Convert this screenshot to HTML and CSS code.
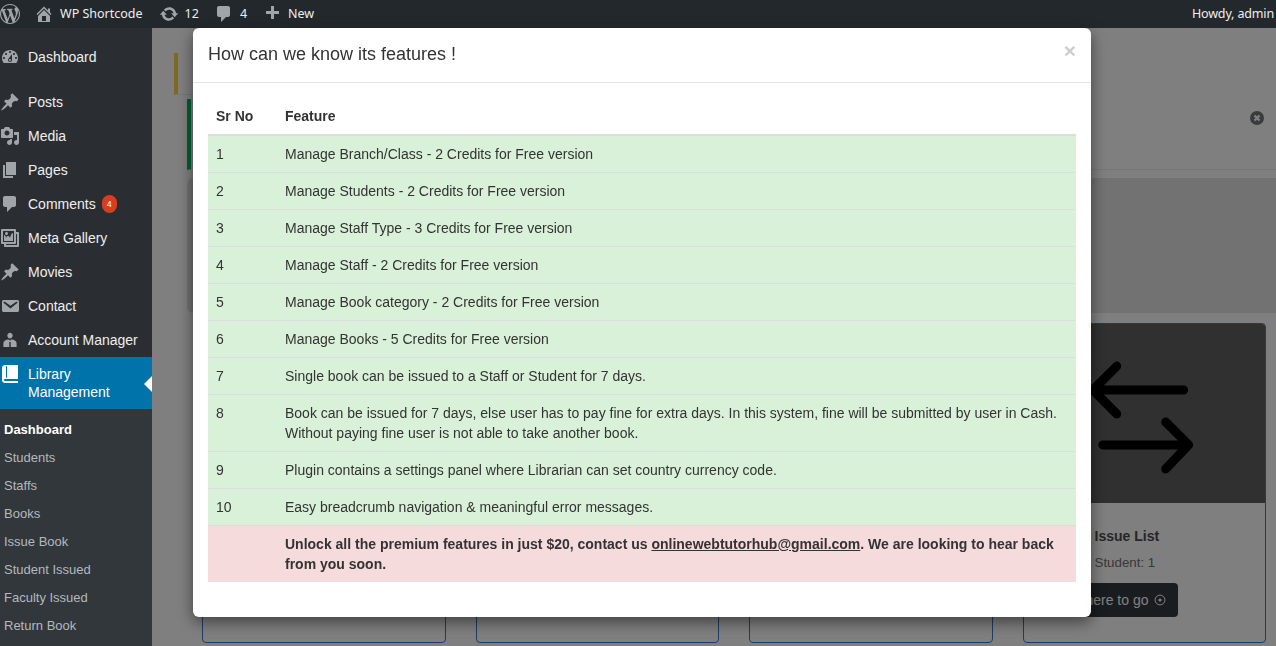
FILE: index.html
```html
<!DOCTYPE html>
<html lang="en">
<head>
<meta charset="utf-8">
<title>Library Management</title>
<link rel="stylesheet" href="styles.css">
</head>
<body>
<header class="adminbar">
  <svg class="bar-logo" viewBox="0 0 20 20"><path d="M20 10c0-5.51-4.49-10-10-10C4.48 0 0 4.49 0 10c0 5.52 4.48 10 10 10 5.51 0 10-4.48 10-10zM7.78 15.37L4.37 6.22c.55-.02 1.17-.08 1.17-.08.5-.06.44-1.13-.06-1.11 0 0-1.45.11-2.37.11-.18 0-.37 0-.58-.01C4.12 2.69 6.87 1.11 10 1.11c2.33 0 4.45.87 6.05 2.34-.68-.11-1.65.39-1.65 1.58 0 .74.45 1.36.9 2.1.35.61.55 1.36.55 2.46 0 1.49-1.4 5-1.4 5l-3.03-8.37c.54-.02.82-.17.82-.17.5-.05.44-1.25-.06-1.22 0 0-1.44.12-2.38.12-.87 0-2.33-.12-2.33-.12-.5-.03-.56 1.2-.06 1.22l.92.08 1.26 3.41zM17.41 10c.24-.64.74-1.87.43-4.25.7 1.29 1.05 2.71 1.05 4.25 0 3.29-1.73 6.24-4.4 7.78.97-2.59 1.94-5.2 2.92-7.78zM6.1 18.09C3.12 16.65 1.11 13.53 1.11 10c0-1.3.23-2.48.72-3.59C3.25 10.3 4.67 14.2 6.1 18.09zm4.03-6.63l2.58 6.98c-.86.29-1.76.45-2.71.45-.79 0-1.57-.11-2.29-.33.81-2.38 1.62-4.74 2.42-7.1z"/></svg>
  <div class="bar-item bar-site">
    <svg class="bar-icon" viewBox="0 0 20 20"><path d="M16 8.5l1.53 1.53-1.06 1.06L10 4.62l-6.47 6.47-1.06-1.06L10 2.5l4 4v-2h2v4zm-6-2.46l6 5.99V18H4v-5.97zM12 17v-5H8v5h4z"/></svg>
    <span>WP Shortcode</span>
  </div>
  <div class="bar-item bar-updates">
    <svg class="bar-icon" viewBox="0 0 20 20"><path d="M10.2 3.28c3.53 0 6.43 2.61 6.92 6h2.08l-3.5 4-3.5-4h2.32c-.45-1.97-2.21-3.45-4.32-3.45-1.45 0-2.73.71-3.54 1.78L4.95 5.66C6.23 4.2 8.11 3.28 10.2 3.28zm-.4 13.44c-3.52 0-6.43-2.61-6.92-6H.8l3.5-4c1.17 1.33 2.33 2.67 3.5 4H5.48c.45 1.97 2.21 3.45 4.32 3.45 1.45 0 2.73-.71 3.54-1.78l1.71 1.95c-1.28 1.46-3.15 2.38-5.25 2.38z"/></svg>
    <span>12</span>
  </div>
  <div class="bar-item bar-comments">
    <svg class="bar-icon" viewBox="0 0 20 20"><path d="M5 2h9c1.1 0 2 .9 2 2v7c0 1.1-.9 2-2 2h-2l-5 5v-5H5c-1.1 0-2-.9-2-2V4c0-1.1.9-2 2-2z"/></svg>
    <span>4</span>
  </div>
  <div class="bar-item bar-new">
    <svg class="bar-icon" viewBox="0 0 20 20"><path d="M17 7v3h-5v5H9v-5H4V7h5V2h3v5h5z"/></svg>
    <span>New</span>
  </div>
  <div class="bar-howdy">Howdy, admin</div>
</header>

<div class="layout">
  <nav class="sidebar">
    <a class="menu-item menu-first">
      <svg class="menu-icon" viewBox="0 0 20 20"><path d="M3.76 16h12.48c1.1-1.37 1.76-3.11 1.76-5 0-4.42-3.58-8-8-8s-8 3.58-8 8c0 1.89.66 3.63 1.76 5zM10 4c.55 0 1 .45 1 1s-.45 1-1 1-1-.45-1-1 .45-1 1-1zM6 6c.55 0 1 .45 1 1s-.45 1-1 1-1-.45-1-1 .45-1 1-1zm8 0c.55 0 1 .45 1 1s-.45 1-1 1-1-.45-1-1 .45-1 1-1zm-5.37 5.55L12 7v6c0 1.1-.9 2-2 2s-2-.9-2-2c0-.57.24-1.08.63-1.45zM4 10c.55 0 1 .45 1 1s-.45 1-1 1-1-.45-1-1 .45-1 1-1zm12 0c.55 0 1 .45 1 1s-.45 1-1 1-1-.45-1-1 .45-1 1-1zm-5 3c0-.55-.45-1-1-1s-1 .45-1 1 .45 1 1 1 1-.45 1-1z"/></svg>
      <span>Dashboard</span>
    </a>
    <a class="menu-item menu-sep">
      <svg class="menu-icon" viewBox="0 0 20 20"><path d="M10.44 3.02l1.82-1.82 6.36 6.35-1.83 1.82c-1.05-.68-2.48-.57-3.41.36l-.75.75c-.92.93-1.04 2.35-.35 3.41l-1.83 1.82-2.41-2.41-2.8 2.79c-.42.42-3.38 2.71-3.8 2.29s1.86-3.39 2.28-3.81l2.79-2.79L4.1 9.36l1.83-1.82c1.05.69 2.48.57 3.41-.36l.75-.75c.93-.92 1.05-2.35.35-3.41z"/></svg>
      <span>Posts</span>
    </a>
    <a class="menu-item">
      <svg class="menu-icon" viewBox="0 0 20 20"><path d="M13 11V4c0-.55-.45-1-1-1h-1.67L9 1H5L3.67 3H2c-.55 0-1 .45-1 1v7c0 .55.45 1 1 1h10c.55 0 1-.45 1-1zM7 4.5c1.38 0 2.5 1.12 2.5 2.5S8.38 9.5 7 9.5 4.5 8.38 4.5 7 5.62 4.5 7 4.5zM14 6h5v10.5c0 1.38-1.12 2.5-2.5 2.5S14 17.88 14 16.5s1.12-2.5 2.5-2.5c.17 0 .34.02.5.05V9h-3V6zm-4 8.05V13h2v3.5c0 1.38-1.12 2.5-2.5 2.5S7 17.88 7 16.5 8.12 14 9.5 14c.17 0 .34.02.5.05z"/></svg>
      <span>Media</span>
    </a>
    <a class="menu-item">
      <svg class="menu-icon" viewBox="0 0 20 20"><path d="M6 15V2h10v13H6zm-1 1h8v2H3V5h2v11z"/></svg>
      <span>Pages</span>
    </a>
    <a class="menu-item">
      <svg class="menu-icon" viewBox="0 0 20 20"><path d="M5 2h9c1.1 0 2 .9 2 2v7c0 1.1-.9 2-2 2h-2l-5 5v-5H5c-1.1 0-2-.9-2-2V4c0-1.1.9-2 2-2z"/></svg>
      <span>Comments</span><b class="badge">4</b>
    </a>
    <a class="menu-item">
      <svg class="menu-icon" viewBox="0 0 20 20"><path d="M16 4h1.96c.57 0 1.04.47 1.04 1.04v12.92c0 .57-.47 1.04-1.04 1.04H5.04C4.47 19 4 18.53 4 17.96V16H2.04C1.47 16 1 15.53 1 14.96V2.04C1 1.47 1.47 1 2.04 1h12.92c.57 0 1.04.47 1.04 1.04V4zM3 14h11V3H3v11zm5-8.5C8 4.67 7.33 4 6.5 4S5 4.67 5 5.5 5.67 7 6.5 7 8 6.33 8 5.5zm2 4.5s1-5 3-5v8H4V7c2 0 2 3 2 3s.33-2 2-2 2 2 2 2zm7 7V6h-1v8.96c0 .57-.47 1.04-1.04 1.04H6v1h11z"/></svg>
      <span>Meta Gallery</span>
    </a>
    <a class="menu-item">
      <svg class="menu-icon" viewBox="0 0 20 20"><path d="M10.44 3.02l1.82-1.82 6.36 6.35-1.83 1.82c-1.05-.68-2.48-.57-3.41.36l-.75.75c-.92.93-1.04 2.35-.35 3.41l-1.83 1.82-2.41-2.41-2.8 2.79c-.42.42-3.38 2.71-3.8 2.29s1.86-3.39 2.28-3.81l2.79-2.79L4.1 9.36l1.83-1.82c1.05.69 2.48.57 3.41-.36l.75-.75c.93-.92 1.05-2.35.35-3.41z"/></svg>
      <span>Movies</span>
    </a>
    <a class="menu-item">
      <svg class="menu-icon" viewBox="0 0 20 20"><path d="M3.87 4h13.25C18.37 4 19 4.59 19 5.79v8.42c0 1.19-.63 1.79-1.88 1.79H3.87c-1.25 0-1.88-.6-1.88-1.79V5.79c0-1.2.63-1.79 1.88-1.79zm6.62 8.6l6.74-5.53c.24-.2.43-.66.13-1.07-.29-.41-.82-.42-1.17-.17l-5.7 3.86L4.8 5.83c-.35-.25-.88-.24-1.17.17-.3.41-.11.87.13 1.07z"/></svg>
      <span>Contact</span>
    </a>
    <a class="menu-item">
      <svg class="menu-icon" viewBox="0 0 20 20"><path fill-rule="evenodd" d="M7.3 5.6c0-1.5 1.2-2.9 2.7-2.9s2.7 1.4 2.7 2.9S11.5 8.6 10 8.6 7.3 7.1 7.3 5.6zM3.4 17v-3.6c0-2.3 1.9-3.7 5.4-3.9l1.2 1.3 1.2-1.3c3.5.2 5.4 1.6 5.4 3.9V17zM9.3 12v5h1.4v-5z"/></svg>
      <span>Account Manager</span>
    </a>
    <a class="menu-item menu-current">
      <svg class="menu-icon" viewBox="0 0 20 20"><path fill-rule="evenodd" d="M5 17h13v2H5c-1.66 0-3-1.34-3-3V4c0-1.66 1.34-3 3-3h13v14H5c-.55 0-1 .45-1 1s.45 1 1 1zm2-3.5v-11c0-.28-.22-.5-.5-.5s-.5.22-.5.5v11c0 .28.22.5.5.5s.5-.22.5-.5z"/></svg>
      <span>Library Management</span>
    </a>
    <ul class="submenu">
      <li class="sub-current">Dashboard</li>
      <li>Students</li>
      <li>Staffs</li>
      <li>Books</li>
      <li>Issue Book</li>
      <li>Student Issued</li>
      <li>Faculty Issued</li>
      <li>Return Book</li>
    </ul>
  </nav>

  <main class="content">
    <div class="notice notice-warning"></div>
    <div class="notice notice-success">
      <svg class="dismiss" viewBox="0 0 14 14"><circle cx="7" cy="7" r="7"/><path d="M4.5 4.5l5 5M9.5 4.5l-5 5"/></svg>
    </div>
    <div class="panel"></div>
    <div class="cards">
      <div class="card"></div>
      <div class="card"></div>
      <div class="card"></div>
      <div class="card">
        <div class="card-image">
          <svg class="arrows" viewBox="0 0 242 179"><path d="M160 66H69M93 42L69 66l24 24M79 121h86M142 98l23 23-23 24"/></svg>
        </div>
        <div class="card-body">
          <h4 class="card-title">Issue List</h4>
          <p class="card-text">Student: 1</p>
          <div class="card-btn">here to go
            <svg class="btn-icon" viewBox="0 0 12 12"><circle cx="6" cy="6" r="4.9"/><circle class="btn-dot" cx="6" cy="6" r="1.6"/></svg>
          </div>
        </div>
      </div>
    </div>
  </main>
</div>

<div class="backdrop"></div>

<section class="modal">
  <div class="modal-header">
    <h4 class="modal-title">How can we know its features !</h4>
    <span class="close">×</span>
  </div>
  <div class="modal-body">
    <table class="features">
      <thead>
        <tr><th class="col-no">Sr No</th><th>Feature</th></tr>
      </thead>
      <tbody>
        <tr><td>1</td><td>Manage Branch/Class - 2 Credits for Free version</td></tr>
        <tr><td>2</td><td>Manage Students - 2 Credits for Free version</td></tr>
        <tr><td>3</td><td>Manage Staff Type - 3 Credits for Free version</td></tr>
        <tr><td>4</td><td>Manage Staff - 2 Credits for Free version</td></tr>
        <tr><td>5</td><td>Manage Book category - 2 Credits for Free version</td></tr>
        <tr><td>6</td><td>Manage Books - 5 Credits for Free version</td></tr>
        <tr><td>7</td><td>Single book can be issued to a Staff or Student for 7 days.</td></tr>
        <tr><td>8</td><td>Book can be issued for 7 days, else user has to pay fine for extra days. In this system, fine will be submitted by user in Cash. Without paying fine user is not able to take another book.</td></tr>
        <tr><td>9</td><td>Plugin contains a settings panel where Librarian can set country currency code.</td></tr>
        <tr><td>10</td><td>Easy breadcrumb navigation &amp; meaningful error messages.</td></tr>
        <tr class="row-danger"><td></td><td><b>Unlock all the premium features in just $20, contact us <u>onlinewebtutorhub@gmail.com</u>. We are looking to hear back from you soon.</b></td></tr>
      </tbody>
    </table>
  </div>
</section>
</body>
</html>
```
FILE: styles.css
```css
* { box-sizing: border-box; }
html, body { height: 100%; }
body {
  margin: 0;
  overflow: hidden;
  background: #fff;
  color: #333;
  font-family: "Liberation Sans", Arial, sans-serif;
  font-size: 14px;
  line-height: 20px;
}

/* Admin bar */
.adminbar {
  display: flex;
  align-items: center;
  height: 28px;
  background: #23282d;
  color: #eee;
  font-family: "Noto Sans", sans-serif;
  font-size: 12.5px;
}
.adminbar svg { fill: #a0a5aa; flex: none; }
.bar-logo { width: 20px; height: 20px; }
.bar-item { display: flex; align-items: center; }
.bar-icon { width: 20px; height: 20px; }
.bar-site { margin-left: 14px; gap: 6px; }
.bar-updates { margin-left: 16px; gap: 6px; }
.bar-comments { margin-left: 15px; gap: 6px; }
.bar-new { margin-left: 15px; gap: 6px; }
.bar-howdy { margin-left: auto; padding-right: 2px; letter-spacing: -.15px; }

.layout { display: flex; height: calc(100% - 28px); }

/* Sidebar */
.sidebar {
  position: relative;
  display: flex;
  flex-direction: column;
  flex: none;
  width: 152px;
  padding-top: 12px;
  overflow: hidden;
  background: #2a2e33;
  color: #eee;
}
.menu-item {
  position: relative;
  display: flex;
  flex: none;
  align-items: center;
  height: 34px;
  padding-left: 28px;
}
.menu-sep { margin-top: 11px; }
.menu-icon {
  position: absolute;
  left: 0;
  top: 7px;
  width: 20px;
  height: 20px;
  fill: #a0a5aa;
}
.badge {
  display: block;
  width: 15px;
  height: 18px;
  margin-left: 6px;
  border-radius: 9px;
  background: #d63e1e;
  color: #fff;
  font-size: 9px;
  font-weight: 400;
  line-height: 18px;
  text-align: center;
}
.menu-current {
  height: 52px;
  line-height: 18px;
  background: #0073aa;
  color: #fff;
}
.menu-current .menu-icon { fill: #fff; top: 7px; }
.menu-current::after {
  content: "";
  position: absolute;
  right: 0;
  top: 19px;
  border: 8px solid transparent;
  border-left-width: 0;
  border-right-color: #fff;
}
.submenu {
  flex: 1;
  margin: 0;
  padding: 7px 0 0;
  list-style: none;
  background: #32373c;
  color: #b4b9be;
  font-size: 13px;
}
.submenu li { height: 28px; line-height: 28px; padding-left: 4px; }
.sub-current { color: #fff; font-weight: 700; }

/* Page under the dialog */
.content { flex: 1; min-width: 0; padding-top: 25px; }
.notice { background: #fff; border-bottom: 1px solid #ececec; }
.notice-warning {
  width: 300px;
  height: 42px;
  margin-left: 22px;
  border-left: 4px solid #ffd23a;
}
.notice-success {
  display: flex;
  align-items: flex-start;
  justify-content: flex-end;
  height: 71px;
  margin: 4px 0 0 35px;
  padding: 12px 12px 0 0;
  border-left: 4px solid #00be66;
}
.dismiss { width: 14px; height: 14px; }
.dismiss circle { fill: #72777c; }
.dismiss path { stroke: #fff; stroke-width: 2.4; fill: none; }
.panel {
  height: 135px;
  margin: 8px 0 0 35px;
  border-radius: 6px 0 0 6px;
  background: #e4e4e4;
}
.cards {
  display: flex;
  gap: 30px;
  height: 320px;
  margin: 10px 10px 0 50px;
}
.card {
  flex: 1;
  border: 1px solid #3a7bc8;
  border-radius: 4px;
  background: #fff;
  overflow: hidden;
}
.card-image { height: 179px; background: #606060; }
.arrows { display: block; width: 100%; height: 100%; }
.arrows path {
  fill: none;
  stroke: #000;
  stroke-width: 9;
  stroke-linecap: round;
  stroke-linejoin: round;
}
.card-body { padding: 23px 0 0 71px; }
.card-title { margin: 0; font-size: 14px; font-weight: 700; line-height: 20px; color: #4d4d4d; }
.card-text { margin: 7px 0 0; font-size: 13.33px; color: #707070; }
.card-btn {
  display: flex;
  align-items: center;
  justify-content: flex-end;
  gap: 5px;
  width: 134px;
  height: 34px;
  margin: 10px 0 0 -51px;
  padding-right: 12px;
  border-radius: 4px;
  background: #343a40;
  color: #fff;
}
.btn-icon { width: 12px; height: 12px; fill: none; stroke: #fff; }
.btn-dot { fill: #fff; stroke: none; }

/* Dialog */
.backdrop {
  position: fixed;
  left: 152px;
  top: 28px;
  right: 0;
  bottom: 0;
  background: rgba(0, 0, 0, .5);
}
.modal {
  position: fixed;
  left: 193px;
  top: 28px;
  width: 898px;
  height: 589px;
  border-radius: 6px;
  background: #fff;
  box-shadow: 0 5px 15px rgba(0, 0, 0, .5);
}
.modal-header {
  display: flex;
  align-items: flex-start;
  justify-content: space-between;
  height: 55px;
  padding: 15px;
  border-bottom: 1px solid #e5e5e5;
}
.modal-title { margin: 0; font-size: 18px; font-weight: 500; line-height: 22px; color: #333; }
.close { font-size: 21px; font-weight: 700; line-height: 16px; color: #000; opacity: .2; }
.modal-body { padding: 15px; }
.features { width: 100%; border-collapse: collapse; }
.features th, .features td { padding: 8px; text-align: left; vertical-align: top; }
.features th { border-bottom: 2px solid #ddd; color: #333; }
.col-no { width: 69px; }
.features td { border-top: 1px solid #ddd; background: #d8f1d8; color: #333; }
.features tbody tr:first-child td { border-top: 0; }
.features .row-danger td { background: #f5dbdb; }
```
